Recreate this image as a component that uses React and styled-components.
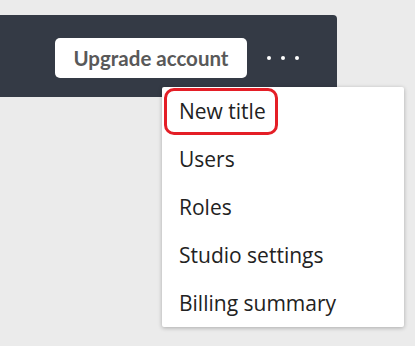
import React from "react";
import styled, { createGlobalStyle } from "styled-components";

const Global = createGlobalStyle`
  html, body { margin: 0; padding: 0; background: #ebebeb; }
  body { font-family: "Open Sans", "Noto Sans", sans-serif; }
`;

const Page = styled.div`
  position: relative;
  width: 415px;
  height: 346px;
  padding-top: 15px;
  box-sizing: border-box;
  overflow: hidden;
`;

const Header = styled.header`
  width: 337px;
  height: 82px;
  background: #343a45;
  border-top-right-radius: 4px;
  display: flex;
  align-items: flex-start;
  justify-content: flex-end;
  padding: 23px 32px 0 0;
  box-sizing: border-box;
  gap: 14px;
`;

const UpgradeButton = styled.button`
  width: 192px;
  height: 40px;
  border: none;
  border-radius: 5px;
  background: #ffffff;
  color: #595959;
  font-family: Lato, "Open Sans", sans-serif;
  font-weight: 700;
  font-size: 20.5px;
  cursor: pointer;
  padding: 0;
`;

const DotsButton = styled.button`
  width: 44px;
  height: 40px;
  border: none;
  background: transparent;
  display: flex;
  align-items: center;
  justify-content: center;
  gap: 10px;
  padding: 0;
  cursor: pointer;
`;

const Dot = styled.span`
  width: 4px;
  height: 4px;
  border-radius: 50%;
  background: #ffffff;
`;

const Menu = styled.ul`
  position: absolute;
  left: 162px;
  top: 87px;
  width: 242px;
  margin: 0;
  padding: 0;
  list-style: none;
  background: #ffffff;
  border-radius: 2px;
  box-shadow: 0 1px 4px rgba(0, 0, 0, 0.28);
`;

const MenuItem = styled.li`
  position: relative;
  height: 48px;
  display: flex;
  align-items: center;
  padding-left: 17px;
  font-family: "Open Sans", sans-serif;
  font-size: 21px;
  color: #222222;
`;

const Highlight = styled.span`
  position: absolute;
  left: 2px;
  top: 1px;
  width: 114px;
  height: 47px;
  box-sizing: border-box;
  border: 3px solid #e41e26;
  border-radius: 10px;
`;

const items = ["New title", "Users", "Roles", "Studio settings", "Billing summary"];

export default function App() {
  return (
    <Page>
      <Global />
      <Header>
        <UpgradeButton>Upgrade account</UpgradeButton>
        <DotsButton aria-label="More">
          <Dot />
          <Dot />
          <Dot />
        </DotsButton>
      </Header>
      <Menu>
        {items.map((label, i) => (
          <MenuItem key={label}>
            {i === 0 && <Highlight />}
            {label}
          </MenuItem>
        ))}
      </Menu>
    </Page>
  );
}
